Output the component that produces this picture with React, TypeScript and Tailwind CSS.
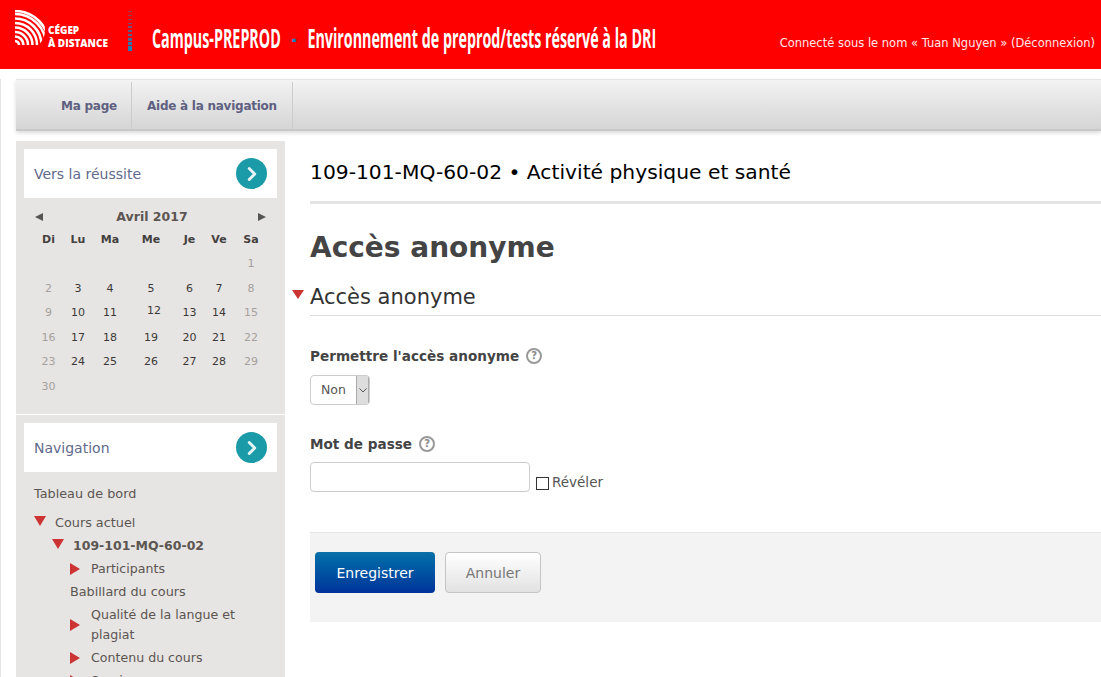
import { ChevronRight } from "lucide-react";

const weeks = [
  ["", "", "", "", "", "", "1"],
  ["2", "3", "4", "5", "6", "7", "8"],
  ["9", "10", "11", "12", "13", "14", "15"],
  ["16", "17", "18", "19", "20", "21", "22"],
  ["23", "24", "25", "26", "27", "28", "29"],
  ["30", "", "", "", "", "", ""],
];

const dayNames = ["Di", "Lu", "Ma", "Me", "Je", "Ve", "Sa"];

function Logo() {
  return (
    <svg width="30" height="35" viewBox="0 0 30 35" className="shrink-0">
      <defs>
        <clipPath id="logo-clip">
          <path d="M0 0 H12 C23 1 30 9 30 20 C30 27 27 32 23 35 H0 Z" />
        </clipPath>
      </defs>
      <g clipPath="url(#logo-clip)" fill="none" stroke="#fff" strokeWidth="2.6">
        <circle cx="0" cy="35" r="4" />
        <circle cx="0" cy="35" r="8.5" />
        <circle cx="0" cy="35" r="13" />
        <circle cx="0" cy="35" r="17.5" />
        <circle cx="0" cy="35" r="22" />
        <circle cx="0" cy="35" r="26.5" />
        <circle cx="0" cy="35" r="31" />
        <circle cx="0" cy="35" r="34" />
      </g>
    </svg>
  );
}

// barres bleues du logo, de plus en plus épaisses vers le bas
function Separator() {
  const bars = [
    [0, 1],
    [4, 1],
    [8, 1],
    [12, 1],
    [15, 2],
    [19, 2],
    [23, 2],
    [27, 3],
    [31, 3],
    [35, 5],
  ];
  return (
    <svg width="4" height="40" viewBox="0 0 4 40" className="mt-[11px] shrink-0">
      {bars.map(([y, h], i) => (
        <rect key={y} x="0" y={y} width="4" height={h} fill="#1d7fb8" opacity={0.45 + i * 0.06} />
      ))}
    </svg>
  );
}

function Header() {
  return (
    <header className="h-[69px] bg-[#ff0000] flex text-white relative">
      <div className="flex items-start pl-[15px] pt-[10px] w-[128px] shrink-0">
        <Logo />
        <div className="ml-[3px] mt-[14px] text-[10px] leading-[13px] font-black font-['Open_Sans',sans-serif] whitespace-nowrap">
          <div>CÉGEP</div>
          <div>À DISTANCE</div>
        </div>
      </div>
      <Separator />
      <div className="ml-[20px] mt-[21px] h-[34px] whitespace-nowrap origin-left scale-x-[0.55] font-['Open_Sans',sans-serif] font-bold text-[26px] leading-[34px]">
        Campus-PREPROD
        <span className="text-[#1d7fb8] mx-[20px]">-</span>
        Environnement de preprod/tests réservé à la DRI
      </div>
      <div className="absolute right-[6px] top-[36px] text-[11.5px] leading-[14px] whitespace-nowrap text-[#ffe8e8]">
        Connecté sous le nom « Tuan Nguyen » (Déconnexion)
      </div>
    </header>
  );
}

function NavBar() {
  return (
    <nav className="ml-[15px] mt-[10px] h-[52px] pt-[2px] bg-linear-to-b from-[#f3f3f3] to-[#d5d5d5] border-t border-t-[#e4e4e4] border-b-2 border-b-[#c8c8c8] shadow-[0_2px_4px_rgba(0,0,0,0.15)] flex text-[12px] tracking-[-0.25px] font-bold text-[#5f5f7f]">
      <div className="w-[116px] pl-[45px] flex items-center border-r border-[#cccccc] whitespace-nowrap">Ma page</div>
      <div className="w-[161px] pl-[15px] flex items-center border-r border-[#cccccc] whitespace-nowrap">Aide à la navigation</div>
    </nav>
  );
}

function BlockHead({ title }: { title: string }) {
  return (
    <div className="h-[49px] mx-[8px] bg-white flex items-center justify-between pl-[10px] pr-[10px] text-[14px] text-[#5f6a8c]">
      <span className="pt-[2px]">{title}</span>
      <span className="w-[31px] h-[31px] rounded-full bg-[#1b9aa8] flex items-center justify-center text-[#e6f4f5]">
        <ChevronRight size={22} strokeWidth={3.2} />
      </span>
    </div>
  );
}

function Calendar() {
  return (
    <div className="h-[273px] pt-[8px]">
      <BlockHead title="Vers la réussite" />
      <div className="mt-[10px] ml-[19px] w-[234px] text-[#5c5552]">
        <div className="relative h-[18px] text-center text-[12.5px] leading-[18px] font-bold">
          Avril 2017
          <span className="absolute left-0 top-[5px] w-0 h-0 border-y-[4px] border-y-transparent border-r-[8px] border-r-[#555555]" />
          <span className="absolute right-[3px] top-[5px] w-0 h-0 border-y-[4px] border-y-transparent border-l-[8px] border-l-[#555555]" />
        </div>
        <div className="grid grid-cols-[29px_30px_34px_48px_29px_30px_34px] -ml-[19px] pl-[18px] w-[270px] mt-[6px] text-center text-[11px] leading-[16px]">
          {dayNames.map((d) => (
            <div key={d} className="font-bold text-[#44403e] h-[16px]">
              {d}
            </div>
          ))}
        </div>
        <div className="grid grid-cols-[29px_30px_34px_48px_29px_30px_34px] auto-rows-[24.6px] -ml-[19px] pl-[18px] w-[270px] mt-[8px] text-center text-[11px] leading-[16px]">
          {weeks.flatMap((week, w) =>
            week.map((d, i) => (
              <div
                key={`${w}-${i}`}
                className={`${i === 0 || i === 6 ? "text-[#a5a09d]" : "text-[#3c3836]"} ${d === "12" ? "pl-[6px] -mt-[2px]" : ""}`}
              >
                {d}
              </div>
            ))
          )}
        </div>
      </div>
    </div>
  );
}

function Down({ className = "" }: { className?: string }) {
  return (
    <span
      className={`inline-block w-0 h-0 border-x-[6.5px] border-x-transparent border-t-[10px] border-t-[#cc3333] ${className}`}
    />
  );
}

function Right({ className = "" }: { className?: string }) {
  return (
    <span
      className={`inline-block w-0 h-0 border-y-[6px] border-y-transparent border-l-[10px] border-l-[#cc3333] ${className}`}
    />
  );
}

function NavItem({ label, tall }: { label: string; tall?: boolean }) {
  return (
    <div className={`flex items-center pl-[54px] text-[12.6px] ${tall ? "h-[43px]" : "h-[23px]"}`}>
      <Right className="shrink-0" />
      <span className="ml-[11px] w-[160px] leading-[20px]">{label}</span>
    </div>
  );
}

function Navigation() {
  return (
    <div className="pt-[8px] border-t border-white">
      <BlockHead title="Navigation" />
      <div className="mt-[10px] text-[12.8px] text-[#5c5552]">
        <div className="pl-[18px] h-[24px] leading-[24px]">Tableau de bord</div>
        <div className="flex items-center h-[24px] mt-[5px] pl-[18px]">
          <Down className="shrink-0 -mt-[4px]" />
          <span className="ml-[9px]">Cours actuel</span>
        </div>
        <div className="flex items-center h-[22px] pl-[36px] font-bold text-[12.5px]">
          <Down className="shrink-0 -mt-[4px]" />
          <span className="ml-[9px]">109-101-MQ-60-02</span>
        </div>
        <NavItem label="Participants" />
        <div className="pl-[54px] h-[23px] leading-[23px]">Babillard du cours</div>
        <NavItem label="Qualité de la langue et plagiat" tall />
        <NavItem label="Contenu du cours" />
        <NavItem label="Services" />
      </div>
    </div>
  );
}

function HelpIcon() {
  return (
    <span className="inline-flex items-center justify-center w-[16px] h-[16px] rounded-full border-2 border-[#999999] text-[#888888] text-[10px] font-bold leading-none">
      ?
    </span>
  );
}

function Main() {
  return (
    <main className="flex-1 min-w-0 pl-[25px] text-[#444444]">
      <h2 className="mt-[16px] h-[44px] text-[20.25px] leading-[30px] text-black whitespace-nowrap">
        109-101-MQ-60-02 • Activité physique et santé
      </h2>
      <div className="h-[3px] bg-[#e4e4e4]" />
      <h1 className="mt-[26px] text-[28px] leading-[36px] font-bold text-[#444444]">Accès anonyme</h1>
      <div className="relative mt-[17px] h-[33px] border-b border-[#dddddd]">
        <Down className="absolute -left-[18px] top-[7px] !border-x-[6px] !border-t-[9px]" />
        <h3 className="text-[21px] leading-[28px] text-[#333333]">Accès anonyme</h3>
      </div>
      <div className="mt-[30px] flex items-center gap-[7px] h-[20px] text-[13.6px] font-bold">
        Permettre l'accès anonyme <HelpIcon />
      </div>
      <div className="mt-[9px] w-[60px] h-[30px] border border-[#cccccc] rounded-[4px] bg-white flex overflow-hidden text-[12.5px] text-[#555555]">
        <span className="flex-1 pl-[10px] leading-[28px]">Non</span>
        <span className="w-[13px] bg-[#dddddd] border-x border-[#aaaaaa] flex items-center justify-center text-[#555555]">
          <svg width="8" height="5" viewBox="0 0 8 5" fill="none" stroke="currentColor">
            <path d="M0.5 0.5 L4 4 L7.5 0.5" />
          </svg>
        </span>
      </div>
      <div className="mt-[29px] flex items-center gap-[7px] h-[20px] text-[13.6px] font-bold">
        Mot de passe <HelpIcon />
      </div>
      <div className="mt-[8px] flex items-end">
        <div className="w-[220px] h-[30px] border border-[#cccccc] rounded-[4px] bg-white" />
        <span className="ml-[6px] mb-[2px] w-[13px] h-[13px] border border-[#333333] bg-white" />
        <span className="ml-[3px] text-[13.5px] leading-[20px] text-[#555555]">Révéler</span>
      </div>
      <div className="mt-[40px] h-[90px] bg-[#f3f3f3] border-t border-[#e4e4e4] flex items-start pt-[19px] pl-[5px] gap-[10px]">
        <button className="w-[120px] h-[41px] pt-[2px] rounded-[4px] bg-linear-to-b from-[#0c70a8] to-[#00329a] text-white text-[14px]">
          Enregistrer
        </button>
        <button className="w-[96px] h-[41px] pt-[2px] rounded-[4px] border border-[#c4c4c4] bg-linear-to-b from-white to-[#e2e2e2] text-[#777777] text-[14px]">
          Annuler
        </button>
      </div>
    </main>
  );
}

export default function App() {
  return (
    <div className="h-[677px] overflow-hidden bg-white font-['DejaVu_Sans',sans-serif]">
      <Header />
      <div className="border-l border-[#e4e4e4]">
        <NavBar />
        <div className="flex mt-[10px]">
          <aside className="ml-[15px] w-[269px] shrink-0 h-[600px] bg-[#e6e5e3]">
            <Calendar />
            <Navigation />
          </aside>
          <Main />
        </div>
      </div>
    </div>
  );
}
